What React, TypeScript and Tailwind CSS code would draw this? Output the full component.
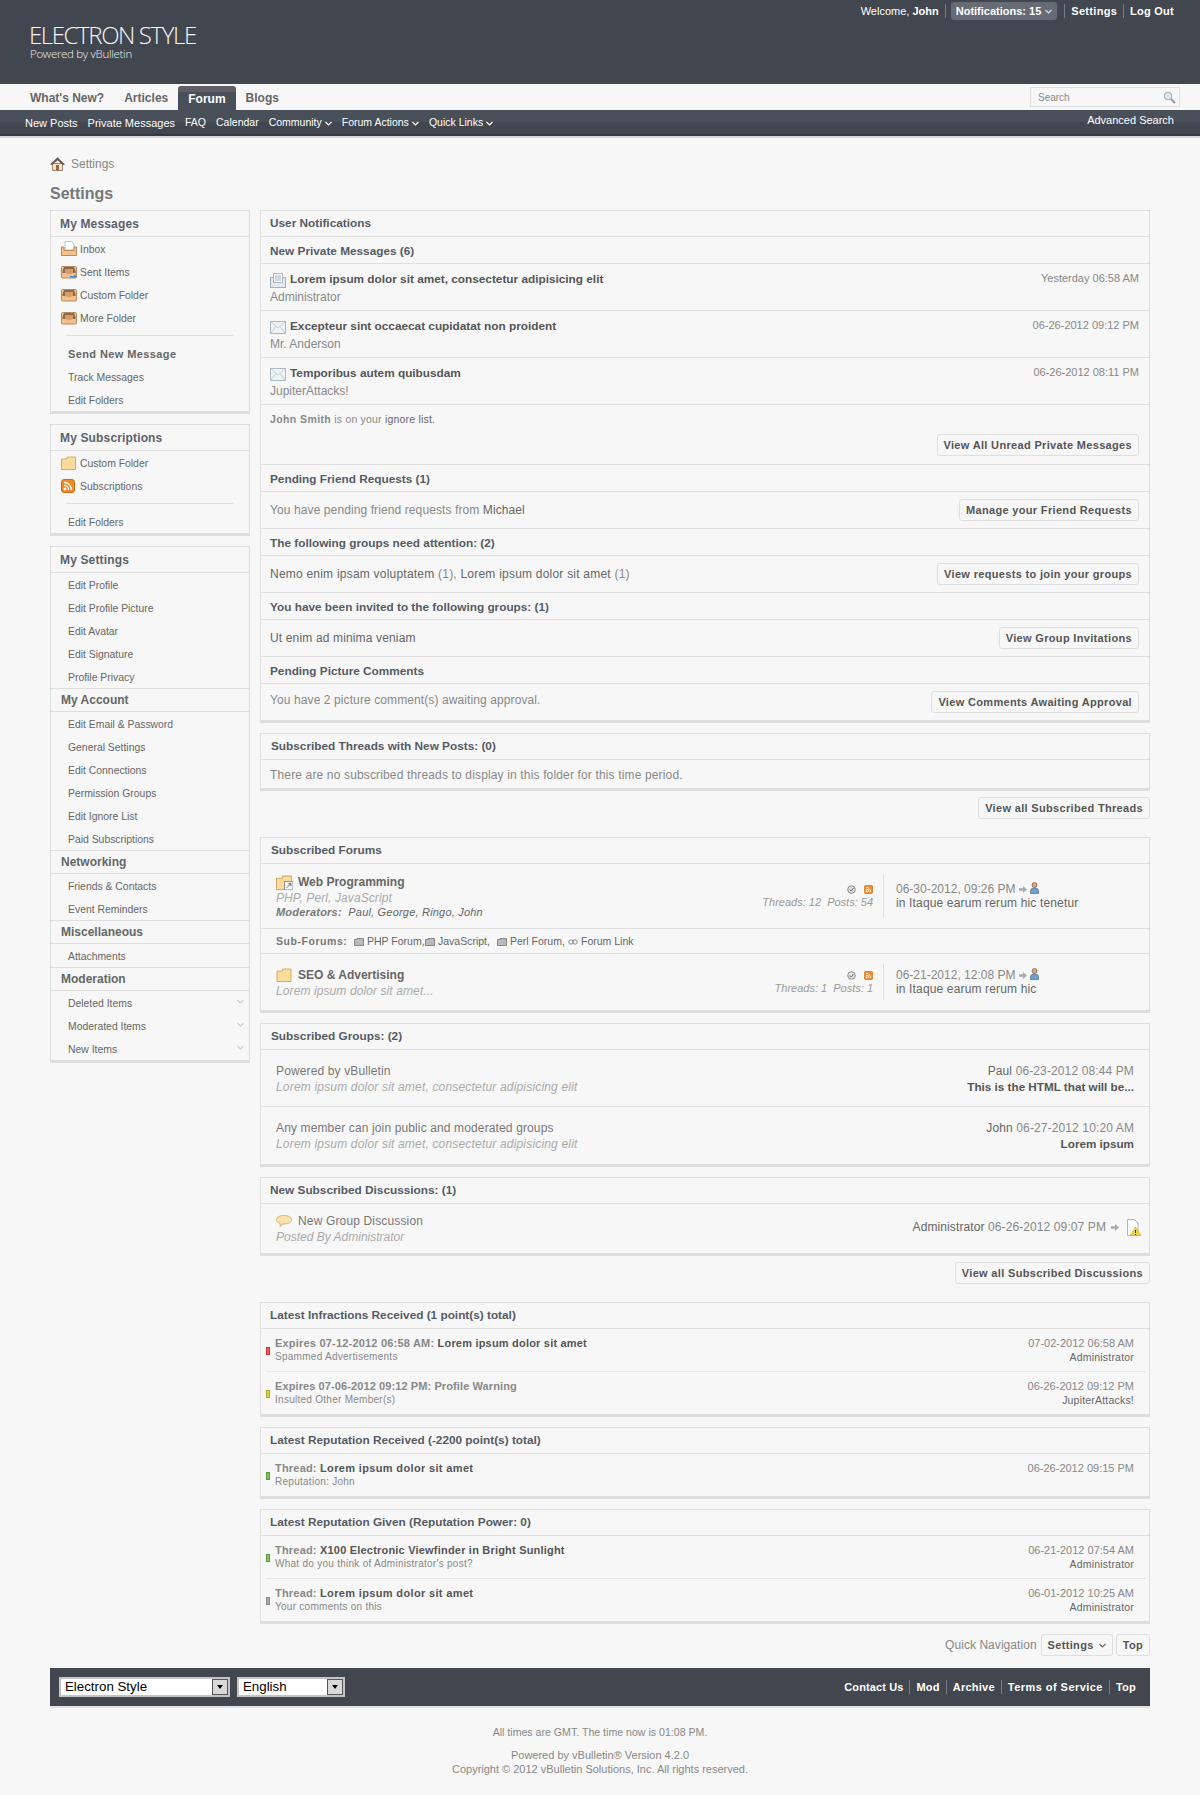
import React from "react";

const Chev = ({ c = "#fff", cls = "" }: { c?: string; cls?: string }) => (
  <svg width="7" height="5" viewBox="0 0 7 5" className={cls}><path d="M0.5 1 L3.5 4 L6.5 1" fill="none" stroke={c} strokeWidth="1.2" /></svg>
);
const Home = () => (
  <svg width="15" height="14" viewBox="0 0 15 14"><path d="M2.5 6.5 H12.5 V13.5 H2.5 Z" fill="#f1e4d2" stroke="#8a6a50" strokeWidth="0.8" /><path d="M7.5 0.7 L14.5 7.2 L12.8 7.6 L7.5 3 L2.2 7.6 L0.5 7.2 Z" fill="#7a5540" stroke="#5f4030" strokeWidth="0.6" /><rect x="6" y="8" width="3" height="5.5" fill="#a0623a" /></svg>
);
const TrayEmpty = () => (
  <svg width="16" height="15" viewBox="0 0 16 15"><path d="M4 0.5 H10.5 L13 3 V9 H4 Z" fill="#fdfdfd" stroke="#b9c3cf" /><path d="M0.5 6 H3 V9.5 H13 V6 H15.5 V14.5 H0.5 Z" fill="#f3c08f" stroke="#bb8a5b" /></svg>
);
const Tray = ({ arrow = false }: { arrow?: boolean }) => (
  <svg width="16" height="14" viewBox="0 0 16 14"><rect x="0.5" y="1.5" width="15" height="11.5" rx="1" fill="#f3c08f" stroke="#bb8a5b" /><path d="M3 2 H13 L14.5 6 V8 H1.5 V6 Z" fill="#8d6a4d" /><path d="M4 4 H12 V8 L8 9.5 L4 8 Z" fill="#d79c66" />{arrow && <path d="M9 11 H13 V9.5 L16 11.5 L13 13.5 V12.5 H9 Z" fill="#3c8fd6" />}</svg>
);
const Folder = ({ w = 16, h = 14, link = false }: { w?: number; h?: number; link?: boolean }) => (
  <svg width={w} height={h} viewBox="0 0 16 14"><path d="M0.5 13.5 V3 H6 V1 H14.5 V13.5 Z" fill="#f9dc9b" stroke="#d3ad68" />{link && <g><rect x="8" y="6" width="8" height="8" fill="#f7f7f7" stroke="#777" strokeWidth="0.7" /><path d="M10 12 L14 8 M11.5 8 H14 V10.5" stroke="#555" strokeWidth="0.8" fill="none" /></g>}</svg>
);
const Rss = ({ s = 14 }: { s?: number }) => (
  <svg width={s} height={s} viewBox="0 0 14 14"><rect x="0.5" y="0.5" width="13" height="13" rx="2.5" fill="#f08a2b" stroke="#d06c14" /><circle cx="4" cy="10" r="1.4" fill="#fff" /><path d="M3 6.3 A4.7 4.7 0 0 1 7.7 11 M3 3.5 A7.5 7.5 0 0 1 10.5 11" stroke="#fff" strokeWidth="1.3" fill="none" /></svg>
);
const Mail = () => (
  <svg width="16" height="13" viewBox="0 0 16 13"><rect x="0.5" y="0.5" width="15" height="12" fill="#f0f3f6" stroke="#aab8c6" /><path d="M0.5 0.5 L8 7 L15.5 0.5 M0.5 12.5 L6 5.5 M15.5 12.5 L10 5.5" fill="none" stroke="#c0cbd6" /></svg>
);
const MailOpen = () => (
  <svg width="16" height="15" viewBox="0 0 16 15"><rect x="0.5" y="4.5" width="15" height="10" fill="#e3e9ef" stroke="#9fb0c0" /><rect x="3.5" y="0.5" width="9" height="9" fill="#fff" stroke="#aab7c3" /><path d="M5 3 H11 M5 5 H11 M5 7 H11" stroke="#9fb0c0" /></svg>
);
const Check = () => (
  <svg width="9" height="9" viewBox="0 0 9 9"><circle cx="4.5" cy="4.5" r="3.8" fill="#e4e4e4" stroke="#888" /><path d="M2.7 4.5 L4.2 6 L6.6 3" fill="none" stroke="#666" /></svg>
);
const Arrow = () => (
  <svg width="8" height="7" viewBox="0 0 8 7"><path d="M0 2.3 H4 V0 L8 3.5 L4 7 V4.7 H0 Z" fill="#aaa" /></svg>
);
const User = () => (
  <svg width="9" height="12" viewBox="0 0 9 12"><circle cx="4.5" cy="3" r="2.5" fill="#d9a47a" stroke="#6b4a32" strokeWidth="0.6" /><path d="M0.5 11.5 V8.5 Q0.5 6 4.5 6 Q8.5 6 8.5 8.5 V11.5 Z" fill="#6f9fcc" stroke="#3c5d7f" strokeWidth="0.6" /></svg>
);
const MiniFolder = () => (
  <svg width="10" height="8" viewBox="0 0 10 8"><path d="M0.5 7.5 V1.5 H3 V0.5 H9.5 V7.5 Z" fill="#bbb" stroke="#888" /></svg>
);
const LinkIcon = () => (
  <svg width="10" height="6" viewBox="0 0 10 6"><circle cx="3" cy="3" r="2.2" fill="none" stroke="#888" /><circle cx="7" cy="3" r="2.2" fill="none" stroke="#888" /></svg>
);
const Bubble = () => (
  <svg width="16" height="13" viewBox="0 0 16 13"><path d="M8 0.5 C12.5 0.5 15.5 2.3 15.5 4.8 C15.5 7.3 12.5 9 8 9 C7.4 9 6.9 9 6.4 8.9 C5.6 10.2 4.6 11.5 4 12 C4.2 11 4.3 9.6 4.1 8.4 C2 7.6 0.5 6.4 0.5 4.8 C0.5 2.3 3.5 0.5 8 0.5 Z" fill="#f8e3b0" stroke="#d9b56a" /></svg>
);
const DocWarn = () => (
  <svg width="15" height="17" viewBox="0 0 15 17"><path d="M1.5 0.5 H8.5 L12 4 V16.5 H1.5 Z" fill="#fff" stroke="#aab7c3" /><path d="M9.5 8 L15 16.5 H4 Z" fill="#f0d33c" stroke="#bfa020" strokeWidth="0.5" /><rect x="9" y="11" width="1" height="3" fill="#333" /><rect x="9" y="15" width="1" height="1" fill="#333" /></svg>
);

const Panel = ({ children, className = "" }: { children: React.ReactNode; className?: string }) => (
  <div className={`border border-[#dedede] border-b-[3px] ${className}`}>{children}</div>
);

const SideHead = ({ t }: { t: string }) => (
  <div className="h-[26px] border-b border-[#dedede] pl-[9px] flex items-center text-[12px] font-bold text-[#5c626d] tracking-[0.15px]">{t}</div>
);
const SideSection = ({ t }: { t: string }) => (
  <div className="h-[24px] border-y border-[#dedede] pl-[10px] flex items-center text-[12px] font-bold text-[#666]">{t}</div>
);
const SideItem = ({ t, icon, bold, chev }: { t: string; icon?: React.ReactNode; bold?: boolean; chev?: boolean }) => (
  <div className={`h-[23px] flex items-center pt-[2px] text-[#666] ${icon ? "pl-[10px]" : "pl-[17px]"} ${bold ? "text-[11px] font-bold tracking-[0.4px] text-[#555]" : "text-[10.4px]"}`}>
    {icon && <span className="w-[19px] flex items-center shrink-0 -mt-[2px]">{icon}</span>}
    <span className="flex-1">{t}</span>
    {chev && <Chev c="#ccc" cls="mr-[5px] -mt-[5px]" />}
  </div>
);
const SideSep = () => <div className="mx-[16px] my-[6px] h-px bg-[#dedede]" />;

const Head = ({ t, tall, pl = "pl-[9px]" }: { t: string; tall?: boolean; pl?: string }) => (
  <div className={`${tall ? "h-[27px] pt-[3px]" : "h-[26px] pt-[1px]"} border-b border-[#dedede] ${pl} flex items-center text-[11.8px] font-bold text-[#555b66]`}>{t}</div>
);
const Btn = ({ t, cls = "" }: { t: React.ReactNode; cls?: string }) => (
  <div className={`h-[22px] px-[6px] border border-[#dedede] rounded-[3px] flex items-center text-[11px] font-bold text-[#555] tracking-[0.33px] whitespace-nowrap ${cls}`}>{t}</div>
);
const MsgRow = ({ icon, t, s, d }: { icon: React.ReactNode; t: string; s: string; d: string }) => (
  <div className="h-[47px] border-b border-[#dedede] pl-[9px] pr-[10px] flex justify-between">
    <div className="pt-[8px]">
      <div className="flex items-center h-[16px] text-[11.8px] font-bold text-[#555]"><span className="w-[20px] flex shrink-0">{icon}</span>{t}</div>
      <div className="h-[17px] mt-px leading-[17px] text-[12px] text-[#888]">{s}</div>
    </div>
    <div className="pt-[7px] text-[11px] leading-[14px] text-[#888]">{d}</div>
  </div>
);
const ActionRow = ({ l, b, last }: { l: React.ReactNode; b: string; last?: boolean }) => (
  <div className={`${last ? "h-[36px]" : "h-[37px] border-b border-[#dedede]"} pl-[9px] pr-[10px] flex items-center justify-between text-[12px] text-[#888] tracking-[0.1px]`}>
    <div className={last ? "-mt-[4px]" : ""}>{l}</div>
    <Btn t={b} />
  </div>
);

const Forum = ({ h, pt, icon, title, desc, mods, stats, date, last, ptR }: any) => (
  <div className={`${h} pl-[15px] pr-[9px] flex`}>
    <div className={`flex-1 ${pt}`}>
      <div className="flex items-center h-[16px] text-[12px] font-bold text-[#666]"><span className="w-[22px] flex shrink-0">{icon}</span>{title}</div>
      <div className="text-[12px] italic text-[#aaa] leading-[15px] mt-[1px] tracking-[0.1px]">{desc}</div>
      {mods && <div className="text-[11px] italic text-[#666] leading-[14px] -mt-[1px] tracking-[0.2px]"><b className="text-[#777]">Moderators:</b>&nbsp; Paul, George, Ringo, John</div>}
    </div>
    <div className={`${ptR} flex flex-col items-end pr-[10px] border-r border-[#dedede] w-[126px] shrink-0 self-start mt-[10px] ${mods ? "h-[44px]" : "h-[36px]"}`}>
      <div className="flex items-center gap-[8px] h-[14px]"><Check /><Rss s={9} /></div>
      <div className="text-[11px] italic text-[#999] leading-[13px] whitespace-pre">{stats}</div>
    </div>
    <div className={`${ptR} pl-[12px] w-[256px] shrink-0 mt-[10px]`}>
      <div className="flex items-center h-[14px] text-[12px] text-[#888]"><span>{date}</span><span className="ml-[4px]"><Arrow /></span><span className="ml-[3px] -mt-[3px]"><User /></span></div>
      <div className="text-[12px] text-[#666] leading-[14px] tracking-[0.15px]">{last}</div>
    </div>
  </div>
);

const GroupRow = ({ a, d, n, t, bt, border }: any) => (
  <div className={`h-[57px] pl-[15px] pr-[15px] pt-[13px] flex justify-between ${border ? "border-b border-[#dedede]" : ""}`}>
    <div>
      <div className="text-[12px] leading-[16px] text-[#777] tracking-[0.13px]">{a}</div>
      <div className="text-[12px] leading-[16px] italic text-[#aaa] tracking-[0.18px]">{d}</div>
    </div>
    <div className="text-right">
      <div className="text-[12px] leading-[16px] text-[#888] tracking-[0.12px]"><span className="text-[#666]">{n}</span> {t}</div>
      <div className="text-[11.7px] leading-[16px] font-bold text-[#555]">{bt}</div>
    </div>
  </div>
);

const Bar = ({ c }: { c: string }) => <span className={`w-[4px] h-[8px] shrink-0 border ${c}`} />;
const InfRow = ({ h, bar, t, s, d, a, pale }: any) => (
  <div className={`${h} ml-[5px] mr-[3px] pr-[12px] flex items-center justify-between`}>
    <div className="flex items-center gap-[5px] self-stretch mt-[1px]">
      <Bar c={bar} />
      <div className="-mt-[1px]">
        <div className={`text-[11px] leading-[14px] font-bold ${pale ? "text-[#888] tracking-[0.1px]" : "text-[#555] tracking-[0.2px]"}`}>{t}</div>
        <div className="text-[10px] leading-[14px] text-[#888] tracking-[0.27px]">{s}</div>
      </div>
    </div>
    <div className="text-right">
      <div className="text-[11px] leading-[14px] text-[#888]">{d}</div>
      <div className="text-[10.5px] leading-[14px] text-[#666] tracking-[0.2px]">{a || "\u00a0"}</div>
    </div>
  </div>
);
const Div = () => <div className="ml-[5px] mr-[3px] h-px bg-[#e6e6e6]" />;

const Sel = ({ w, t }: { w: string; t: string }) => (
  <div className={`${w} h-[20px] bg-white border-[2px] border-[#c4c4c4] flex items-center justify-between text-[13.3px] text-black`}>
    <span className="pl-[4px]">{t}</span>
    <span className="w-[16px] h-full bg-[#d9d9d9] border border-[#555] flex items-center justify-center"><span className="border-x-[3px] border-x-transparent border-t-[4px] border-t-black" /></span>
  </div>
);
const Sep = ({ c = "bg-[#777c85]" }: { c?: string }) => <span className={`block w-px h-[14px] ${c}`} />;

export default function App() {
  return (
    <div className="w-[1200px] h-[1795px] bg-[#f7f7f7] overflow-hidden" style={{ fontFamily: '"Liberation Sans", Arial, sans-serif' }}>
      <header className="h-[84px] bg-[#41464f] relative flex flex-col pl-[29px] pt-[22px] text-[#f7f7f7]" style={{ fontFamily: '"Open Sans", sans-serif' }}>
        <div className="text-[24px] font-light leading-[25px] tracking-[-1.4px]">ELECTRON STYLE</div>
        <div className="text-[11.5px] font-light leading-[13px] tracking-[-0.3px] text-[#eee] pl-px">Powered by vBulletin</div>
        <div className="absolute top-[2px] right-[26px] flex items-center h-[18px] text-[11px] text-white" style={{ fontFamily: '"Liberation Sans", sans-serif' }}>
          <span>Welcome, <b>John</b></span>
          <span className="ml-[6px] mr-[5px]"><Sep /></span>
          <span className="h-[18px] px-[5px] bg-[#666b75] rounded-[3px] flex items-center gap-[4px] font-bold">Notifications: 15 <Chev c="#ddd" /></span>
          <span className="ml-[7px] mr-[6px]"><Sep /></span>
          <b className="tracking-[0.3px]">Settings</b>
          <span className="ml-[6px] mr-[6px]"><Sep /></span>
          <b className="tracking-[0.25px]">Log Out</b>
        </div>
      </header>
      <nav className="h-[26px] flex items-end justify-between pl-[20px] pr-[20px] text-[12px] font-bold text-[#666]">
        <div className="flex items-end">
          <span className="h-[24px] px-[10px] flex items-center">What's New?</span>
          <span className="h-[24px] px-[10px] flex items-center">Articles</span>
          <span className="h-[24px] px-[10px] flex items-center bg-[#4a505a] border-t-[6px] border-t-[#5f5d66] rounded-t-[3px] text-white pb-[5px]">Forum</span>
          <span className="h-[24px] px-[10px] flex items-center">Blogs</span>
        </div>
        <div className="self-center w-[150px] h-[20px] border border-[#dedede] flex items-center justify-between pl-[7px] pr-[3px] text-[10px] font-normal text-[#888]">
          <span>Search</span>
          <svg width="13" height="13" viewBox="0 0 13 13"><circle cx="5" cy="5" r="3.8" fill="#dbe6ee" stroke="#9fb0bd" /><path d="M8 8 L12 12" stroke="#999" strokeWidth="2" /></svg>
        </div>
      </nav>
      <div className="h-[26px] bg-[linear-gradient(#4a505a_0,#4a505a_12px,#41464f_12px,#41464f_24px,#363a42_24px)] flex justify-between pl-[25px] pr-[26px] text-[10.5px] text-white">
        <div className="flex items-center gap-[10px]">
          <span className="text-[11px]">New Posts</span><span className="text-[11px]">Private Messages</span><span>FAQ</span><span>Calendar</span>
          <span className="flex items-center gap-[3px]">Community <Chev /></span>
          <span className="flex items-center gap-[3px]">Forum Actions <Chev /></span>
          <span className="flex items-center gap-[3px]">Quick Links <Chev /></span>
        </div>
        <div className="pt-[2px] text-[11px]">Advanced Search</div>
      </div>
      <div className="h-[2px] bg-[#d9d9d9]" />

      <main className="px-[50px]">
        <div className="pt-[18px] h-[34px] flex items-center gap-[6px] text-[12px] text-[#888]"><Home /><span>Settings</span></div>
        <h1 className="mt-[12px] h-[20px] text-[16px] leading-[20px] font-bold text-[#777]">Settings</h1>
        <div className="mt-[6px] flex gap-[10px] items-start">
          <aside className="w-[200px] shrink-0 flex flex-col gap-[10px]">
            <Panel>
              <SideHead t="My Messages" />
              <SideItem t="Inbox" icon={<TrayEmpty />} />
              <SideItem t="Sent Items" icon={<Tray arrow />} />
              <SideItem t="Custom Folder" icon={<Tray />} />
              <SideItem t="More Folder" icon={<Tray />} />
              <SideSep />
              <SideItem t="Send New Message" bold />
              <SideItem t="Track Messages" />
              <SideItem t="Edit Folders" />
            </Panel>
            <Panel>
              <SideHead t="My Subscriptions" />
              <SideItem t="Custom Folder" icon={<Folder />} />
              <SideItem t="Subscriptions" icon={<Rss />} />
              <SideSep />
              <SideItem t="Edit Folders" />
            </Panel>
            <Panel>
              <SideHead t="My Settings" />
              {["Edit Profile", "Edit Profile Picture", "Edit Avatar", "Edit Signature", "Profile Privacy"].map((t) => <SideItem key={t} t={t} />)}
              <SideSection t="My Account" />
              {["Edit Email & Password", "General Settings", "Edit Connections", "Permission Groups", "Edit Ignore List", "Paid Subscriptions"].map((t) => <SideItem key={t} t={t} />)}
              <SideSection t="Networking" />
              {["Friends & Contacts", "Event Reminders"].map((t) => <SideItem key={t} t={t} />)}
              <SideSection t="Miscellaneous" />
              <SideItem t="Attachments" />
              <SideSection t="Moderation" />
              {["Deleted Items", "Moderated Items", "New Items"].map((t) => <SideItem key={t} t={t} chev />)}
            </Panel>
          </aside>

          <section className="w-[890px] shrink-0 flex flex-col">
            <Panel>
              <Head t="User Notifications" />
              <Head t="New Private Messages (6)" tall />
              <MsgRow icon={<MailOpen />} t="Lorem ipsum dolor sit amet, consectetur adipisicing elit" s="Administrator" d="Yesterday 06:58 AM" />
              <MsgRow icon={<Mail />} t="Excepteur sint occaecat cupidatat non proident" s="Mr. Anderson" d="06-26-2012 09:12 PM" />
              <MsgRow icon={<Mail />} t="Temporibus autem quibusdam" s="JupiterAttacks!" d="06-26-2012 08:11 PM" />
              <div className="h-[60px] border-b border-[#dedede] pl-[9px] pr-[10px] pt-[7px] flex flex-col">
                <div className="text-[10.5px] leading-[14px] text-[#888] tracking-[0.2px]"><b className="tracking-[0.4px]">John Smith</b> is on your <span className="text-[#666]">ignore list.</span></div>
                <div className="flex justify-end mt-[8px]"><Btn t="View All Unread Private Messages" /></div>
              </div>
              <Head t="Pending Friend Requests (1)" tall />
              <ActionRow l={<>You have pending friend requests from <span className="text-[#666]">Michael</span></>} b="Manage your Friend Requests" />
              <Head t="The following groups need attention: (2)" tall />
              <ActionRow l={<span className="text-[#666] tracking-[0.22px]">Nemo enim ipsam voluptatem <span className="text-[#888]">(1),</span> Lorem ipsum dolor sit amet <span className="text-[#888]">(1)</span></span>} b="View requests to join your groups" />
              <Head t="You have been invited to the following groups: (1)" tall />
              <ActionRow l={<span className="text-[#666] tracking-[0.15px]">Ut enim ad minima veniam</span>} b="View Group Invitations" />
              <Head t="Pending Picture Comments" tall />
              <ActionRow l="You have 2 picture comment(s) awaiting approval." b="View Comments Awaiting Approval" last />
            </Panel>

            <Panel className="mt-[10px]">
              <Head t="Subscribed Threads with New Posts: (0)" pl="pl-[10px]" />
              <div className="h-[28px] pl-[9px] pt-[2px] flex items-center text-[12px] text-[#888] tracking-[0.15px]">There are no subscribed threads to display in this folder for this time period.</div>
            </Panel>
            <div className="mt-[6px] flex justify-end"><Btn t="View all Subscribed Threads" /></div>

            <Panel className="mt-[18px]">
              <Head t="Subscribed Forums" pl="pl-[10px]" />
              <div className="h-[65px] border-b border-[#dedede]">
                <Forum h="h-[64px]" pt="pt-[10px]" icon={<Folder w={17} h={15} link />} title="Web Programming" desc="PHP, Perl, JavaScript" mods stats="Threads: 12  Posts: 54" date="06-30-2012, 09:26 PM" last="in Itaque earum rerum hic tenetur" ptR="pt-[8px]" />
              </div>
              <div className="h-[25px] border-b border-[#dedede] pl-[15px] pt-[1px] flex items-center text-[10.5px] text-[#666]">
                <b className="text-[#777] tracking-[0.55px] w-[78px]">Sub-Forums:</b>
                <span className="w-[71px] flex items-center gap-[3px]"><MiniFolder /> PHP Forum,</span>
                <span className="w-[72px] flex items-center gap-[3px]"><MiniFolder /> JavaScript,</span>
                <span className="w-[71px] flex items-center gap-[3px]"><MiniFolder /> Perl Forum,</span>
                <span className="flex items-center gap-[3px]"><LinkIcon /> Forum Link</span>
              </div>
              <Forum h="h-[56px]" pt="pt-[13px]" icon={<Folder w={17} h={14} />} title="SEO & Advertising" desc="Lorem ipsum dolor sit amet..." stats="Threads: 1  Posts: 1" date="06-21-2012, 12:08 PM" last="in Itaque earum rerum hic" ptR="pt-[4px]" />
            </Panel>

            <Panel className="mt-[10px]">
              <Head t="Subscribed Groups: (2)" pl="pl-[10px]" />
              <GroupRow a="Powered by vBulletin" d="Lorem ipsum dolor sit amet, consectetur adipisicing elit" n="Paul" t="06-23-2012 08:44 PM" bt="This is the HTML that will be..." border />
              <GroupRow a="Any member can join public and moderated groups" d="Lorem ipsum dolor sit amet, consectetur adipisicing elit" n="John" t="06-27-2012 10:20 AM" bt="Lorem ipsum" />
            </Panel>

            <Panel className="mt-[10px]">
              <Head t="New Subscribed Discussions: (1)" />
              <div className="h-[49px] pl-[15px] pr-[8px] pt-[9px] flex justify-between">
                <div>
                  <div className="flex items-center h-[16px] text-[12px] text-[#777] tracking-[0.15px]"><span className="w-[22px] flex shrink-0"><Bubble /></span>New Group Discussion</div>
                  <div className="text-[12px] italic text-[#aaa] leading-[16px]">Posted By Administrator</div>
                </div>
                <div className="flex items-center h-[28px] text-[12px] text-[#888] gap-[5px] tracking-[0.1px]"><span><span className="text-[#666]">Administrator</span> 06-26-2012 09:07 PM</span><Arrow /><span className="ml-[2px] flex"><DocWarn /></span></div>
              </div>
            </Panel>
            <div className="mt-[6px] flex justify-end"><Btn t="View all Subscribed Discussions" /></div>

            <Panel className="mt-[18px]">
              <Head t="Latest Infractions Received (1 point(s) total)" />
              <InfRow h="h-[42px]" bar="bg-[#f0535a] border-[#c33]" t={<><span className="text-[#888]">Expires 07-12-2012 06:58 AM:</span> Lorem ipsum dolor sit amet</>} s="Spammed Advertisements" d="07-02-2012 06:58 AM" a="Administrator" />
              <Div />
              <InfRow h="h-[42px]" bar="bg-[#e3d33a] border-[#b5a52a]" t="Expires 07-06-2012 09:12 PM: Profile Warning" pale s="Insulted Other Member(s)" d="06-26-2012 09:12 PM" a="JupiterAttacks!" />
            </Panel>
            <Panel className="mt-[10px]">
              <Head t="Latest Reputation Received (-2200 point(s) total)" />
              <InfRow h="h-[42px]" bar="bg-[#7fc45a] border-[#5a9a3a]" t={<><span className="text-[#888]">Thread:</span> <span className="tracking-[0.35px]">Lorem ipsum dolor sit amet</span></>} s="Reputation: John" d="06-26-2012 09:15 PM" a="" />
            </Panel>
            <Panel className="mt-[10px]">
              <Head t="Latest Reputation Given (Reputation Power: 0)" />
              <InfRow h="h-[42px]" bar="bg-[#7fc45a] border-[#5a9a3a]" t={<><span className="text-[#888]">Thread:</span> X100 Electronic Viewfinder in Bright Sunlight</>} s="What do you think of Administrator's post?" d="06-21-2012 07:54 AM" a="Administrator" />
              <Div />
              <InfRow h="h-[42px]" bar="bg-[#aaa] border-[#888]" t={<><span className="text-[#888]">Thread:</span> <span className="tracking-[0.35px]">Lorem ipsum dolor sit amet</span></>} s="Your comments on this" d="06-01-2012 10:25 AM" a="Administrator" />
            </Panel>

            <div className="mt-[10px] flex justify-end items-center">
              <span className="text-[12px] text-[#888] mr-[4px] tracking-[0.05px]">Quick Navigation</span>
              <Btn t={<span className="flex items-center gap-[5px]">Settings <Chev c="#666" /></span>} cls="mr-[3px]" />
              <Btn t="Top" />
            </div>
          </section>
        </div>

        <div className="mt-[12px] h-[38px] bg-[#41464f] flex items-center justify-between pl-[9px] pr-[14px]">
          <div className="flex gap-[7px]"><Sel w="w-[171px]" t="Electron Style" /><Sel w="w-[108px]" t="English" /></div>
          <div className="flex items-center gap-[6px] text-[11px] font-bold text-white tracking-[0.25px]">
            <span className="tracking-[0.1px]">Contact Us</span><Sep /><span>Mod</span><Sep /><span>Archive</span><Sep /><span className="tracking-[0.45px]">Terms of Service</span><Sep /><span>Top</span>
          </div>
        </div>
        <div className="h-[2px] bg-[#e2e2e2]" />
        <footer className="text-center text-[11px] text-[#888]">
          <div className="mt-[17px] leading-[14px] text-[10.6px]">All times are GMT. The time now is 01:08 PM.</div>
          <div className="mt-[9px] leading-[14px]">Powered by vBulletin® Version 4.2.0</div>
          <div className="leading-[14px]">Copyright © 2012 vBulletin Solutions, Inc. All rights reserved.</div>
        </footer>
      </main>
    </div>
  );
}
